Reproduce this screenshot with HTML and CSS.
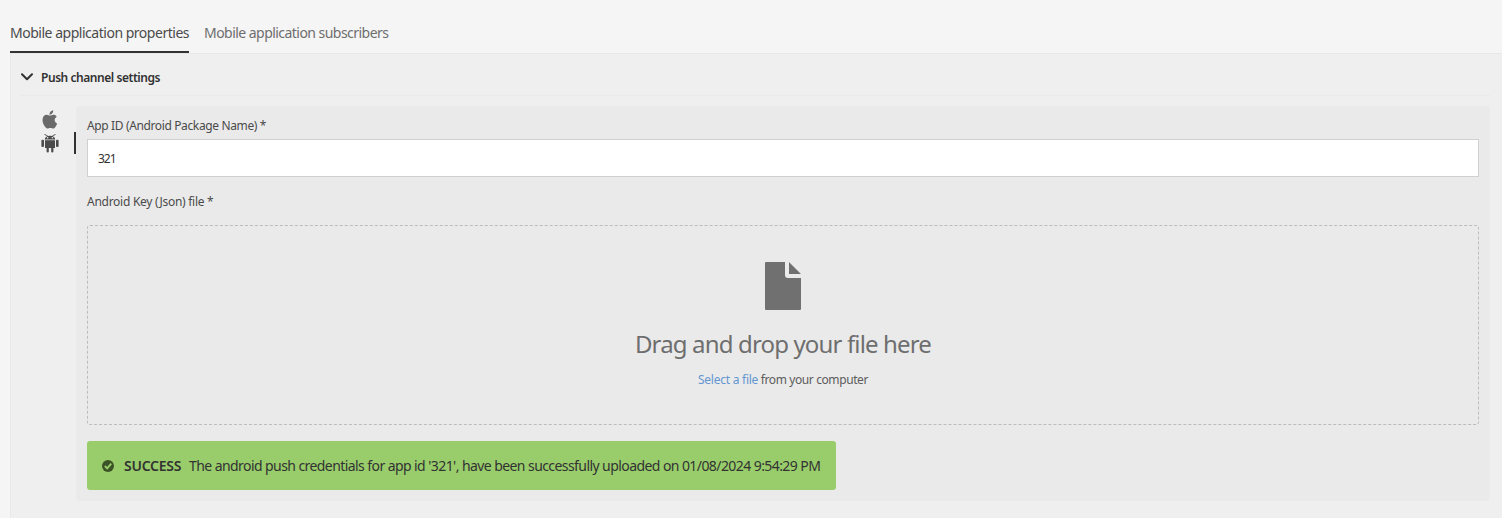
FILE: index.html
```html
<!DOCTYPE html>
<html lang="en">
<head>
<meta charset="utf-8">
<title>Mobile application properties</title>
<link rel="stylesheet" href="styles.css">
</head>
<body>
<nav class="tabs">
  <a class="tab tab-active"><span class="tab-label">Mobile application properties</span></a>
  <a class="tab"><span class="tab-label tab-label-second">Mobile application subscribers</span></a>
</nav>
<main class="panel">
  <header class="section-head">
    <svg class="chevron" width="12" height="8" viewBox="0 0 12 8"><path d="M1 1.200 6 6.200 11 1.200" fill="none" stroke="#323232" stroke-width="2" stroke-linecap="round" stroke-linejoin="round"/></svg>
    <h2 class="section-title">Push channel settings</h2>
  </header>
  <div class="section-body">
    <div class="platforms">
      <div class="platform">
        <svg width="16" height="19" viewBox="0 0 16 19" fill="#6a6a6a"><path d="M11.200.2c.2 1.300-.4 2.500-1.100 3.300-.7.8-1.700 1.300-2.600 1.200-.1-1.200.4-2.300 1.100-3.100C9.300.8 10.300.3 11.200.2z"/><path d="M14.700 6.700c-1.300.8-2 1.900-2 3.300 0 1.600.9 2.900 2.500 3.500-.4 1.300-1 2.400-1.800 3.500-.7 1-1.400 1.500-2.200 1.500-.9 0-1.500-.6-2.800-.6s-1.900.6-2.800.6c-.9 0-1.700-.7-2.500-1.800C1.500 14.800.5 12.300.5 9.900c0-3.300 2.100-5.100 4.300-5.100 1.300 0 2.300.8 3.200.8.900 0 2-.9 3.600-.9 1.200 0 2.300.6 3.100 2z"/></svg>
      </div>
      <div class="platform platform-active">
        <svg width="18" height="19" viewBox="0 0 18 19" fill="#4b4b4b"><path d="M3.800 5.400C3.900 3.800 4.900 2.800 6.300 2.300L3.300.7l.5-.6 3.400 1.900A6 6 0 0 1 9 1.800c.6 0 1.200.1 1.800.2l3.400-1.900.5.600-3 1.600c1.400.5 2.400 1.500 2.500 3.100zM6.600 2.900a.8.8 0 1 0 0 1.600.8.8 0 0 0 0-1.600zm4.800 0a.8.8 0 1 0 0 1.600.8.8 0 0 0 0-1.600z" fill-rule="evenodd"/><path d="M4 6.200h10V14H4z"/><rect x=".4" y="5.700" width="2.600" height="7.300" rx="1"/><rect x="15" y="5.700" width="2.600" height="7.300" rx="1"/><path d="M5.600 13.500h2.200v3.900a1.100 1.100 0 0 1-2.200 0zM10.200 13.500h2.200v3.900a1.100 1.100 0 0 1-2.200 0z"/></svg>
      </div>
    </div>
    <form class="card">
      <label class="label"><span class="label-id">App ID (Android Package Name) *</span></label>
      <div class="input"><span class="value">321</span></div>
      <label class="label label-file"><span class="label-key">Android Key (Json) file *</span></label>
      <div class="dropzone">
        <svg class="file" width="36" height="48" viewBox="0 0 36 48" fill="#707070"><path d="M1 0h19v13a3 3 0 0 0 3 3h13v31a1 1 0 0 1-1 1H1a1 1 0 0 1-1-1V1a1 1 0 0 1 1-1zM24 0 36 12H24z"/></svg>
        <div class="drop-title"><span class="drop-text">Drag and drop your file here</span></div>
        <div class="drop-hint"><a class="link">Select a file</a><span class="hint-text"> from your computer</span></div>
      </div>
      <div class="alert">
        <svg class="check" width="12" height="12" viewBox="0 0 12 12"><circle cx="6" cy="6" r="6" fill="#3b5226"/><path d="M2.800 6 5.200 8.400 9.200 3.600" fill="none" stroke="#99cd6b" stroke-width="1.900"/></svg>
        <strong class="status">SUCCESS</strong>
        <span class="message">The android push credentials for app id '321', have been successfully uploaded on 01/08/2024 9:54:29 PM</span>
      </div>
    </form>
  </div>
</main>
</body>
</html>
```
FILE: styles.css
```css
* { box-sizing: border-box; }
body {
  margin: 0;
  height: 518px;
  overflow: hidden;
  background: #f5f5f5;
  font-family: "Noto Sans", "Open Sans", sans-serif;
  color: #4b4b4b;
  display: flex;
  flex-direction: column;
  white-space: nowrap;
}
.tabs { display: flex; gap: 15px; height: 53px; padding-left: 10px; flex: none; }
.tab { height: 53px; padding-top: 23px; font-size: 14px; line-height: 20px; color: #6e6e6e; }
.tab-active { width: 179px; color: #4b4b4b; border-bottom: 2px solid #323232; }
.tab-label { letter-spacing: -0.48px; }
.tab-label-second { letter-spacing: -0.54px; }
.panel {
  flex: 1;
  margin-left: 10px;
  padding: 0 12px 0 11px;
  background: #efefef;
  border: solid #e8e8e8;
  border-width: 1px 0 0 1px;
}
.section-head { display: flex; align-items: center; height: 42px; padding-top: 5px; border-bottom: 1px solid #eaeaea; margin-left: -1px; }
.chevron { flex: none; margin-right: 8px; }
.section-title { margin: 0; padding-top: 1px; font-size: 12px; line-height: 18px; font-weight: 600; color: #323232; letter-spacing: -0.45px; }
.section-body { display: flex; margin-top: 10px; }
.platforms { width: 54px; display: flex; flex-direction: column; padding-top: 2px; }
.platform { height: 24px; padding: 2px 0 0 20px; }
.platform-active { height: 22px; padding-left: 19px; border-right: 2px solid #323232; }
.platform svg { display: block; }
.card { flex: 1; height: 395px; padding: 11px; background: #eaeaea; border-radius: 4px; }
.label { display: block; height: 22px; font-size: 12px; line-height: 18px; }
.label-id { letter-spacing: -0.37px; }
.label-key { letter-spacing: -0.27px; }
.input { height: 38px; background: #fff; border: 1px solid #d0d0d0; padding-left: 10px; font-size: 12px; line-height: 37px; color: #323232; }
.value { letter-spacing: -1px; }
.label-file { margin-top: 16px; height: 32px; }
.dropzone {
  height: 200px;
  border: 1px dashed #bcbcbc;
  border-radius: 3px;
  display: flex;
  flex-direction: column;
  align-items: center;
  padding-top: 36px;
}
.file { display: block; flex: none; }
.drop-title { margin-top: 17px; font-size: 24px; line-height: 34px; color: #6e6e6e; }
.drop-text { letter-spacing: -0.85px; }
.drop-hint { margin-top: 10px; font-size: 12px; line-height: 18px; color: #5c5c5c; }
.hint-text { letter-spacing: -0.4px; }
.link { color: #6496d2; letter-spacing: -0.25px; }
.alert { display: flex; align-items: center; width: 749px; height: 49px; margin-top: 16px; padding-left: 15px; background: #99cd6b; border-radius: 3px; color: #323232; font-size: 14px; }
.check { flex: none; margin-right: 10px; }
.status { width: 65px; font-weight: 600; letter-spacing: -0.25px; }
.message { letter-spacing: -0.575px; }
```
